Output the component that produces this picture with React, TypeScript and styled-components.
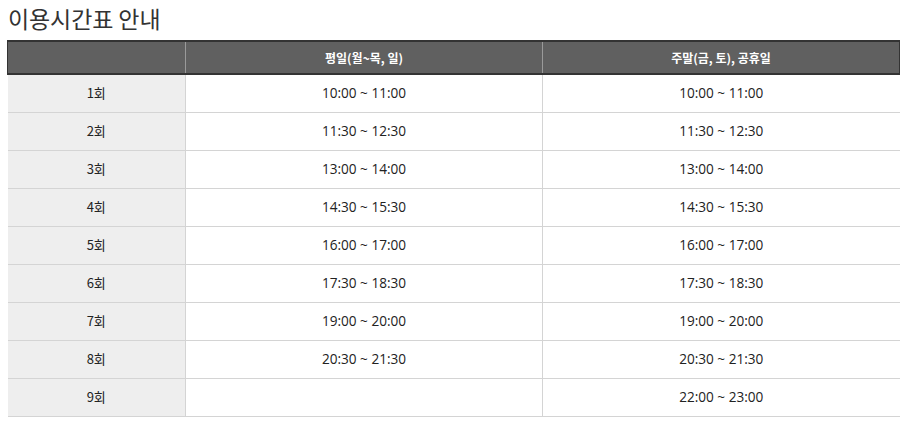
import React from "react";
import styled, { createGlobalStyle } from "styled-components";

const GlobalStyle = createGlobalStyle`
  html, body { margin: 0; padding: 0; background: #fff; }
  body { font-family: "Open Sans", "Noto Sans CJK KR", sans-serif; color: #222; }
`;

const Page = styled.div`
  padding: 2px 14px 0 7px;
`;

const Title = styled.h2`
  margin: 0 0 6px 1px;
  font-family: "Noto Sans CJK KR", sans-serif;
  font-weight: 400;
  font-size: 23px;
  line-height: 32px;
  color: #333;
  letter-spacing: -0.1px;
`;

const Table = styled.table`
  width: 892px;
  border-collapse: collapse;
  table-layout: fixed;
  font-size: 13px;
`;

const HeadCell = styled.th<{ $first?: boolean }>`
  height: 31px;
  padding: 0;
  background: #606060;
  color: #fff;
  font-family: "Noto Sans CJK KR", sans-serif;
  font-weight: 700;
  font-size: 12px;
  border-top: 2px solid #333;
  border-bottom: 2px solid #333;
  border-left: 1px solid ${(p) => (p.$first ? "#333" : "#9a9a9a")};
  &:last-child { border-right: 1px solid #333; }
`;

const Row = styled.tr``;

const Cell = styled.td<{ $label?: boolean }>`
  height: 38px;
  box-sizing: border-box;
  padding: 0 0 2px;
  text-align: center;
  font-family: ${(p) => (p.$label ? `"Noto Sans CJK KR", sans-serif` : `"Open Sans", "Noto Sans CJK KR", sans-serif`)};
  font-size: ${(p) => (p.$label ? "13px" : "13.6px")};
  color: #222;
  background: ${(p) => (p.$label ? "#eeeeee" : "#fff")};
  border-bottom: 1px solid #d4d4d4;
  border-left: ${(p) => (p.$label ? "none" : "1px solid #d4d4d4")};
`;

const rows: [string, string, string][] = [
  ["1회", "10:00 ~ 11:00", "10:00 ~ 11:00"],
  ["2회", "11:30 ~ 12:30", "11:30 ~ 12:30"],
  ["3회", "13:00 ~ 14:00", "13:00 ~ 14:00"],
  ["4회", "14:30 ~ 15:30", "14:30 ~ 15:30"],
  ["5회", "16:00 ~ 17:00", "16:00 ~ 17:00"],
  ["6회", "17:30 ~ 18:30", "17:30 ~ 18:30"],
  ["7회", "19:00 ~ 20:00", "19:00 ~ 20:00"],
  ["8회", "20:30 ~ 21:30", "20:30 ~ 21:30"],
  ["9회", "", "22:00 ~ 23:00"],
];

export default function App() {
  return (
    <Page>
      <GlobalStyle />
      <Title>이용시간표 안내</Title>
      <Table>
        <colgroup>
          <col style={{ width: 178 }} />
          <col style={{ width: 357 }} />
          <col style={{ width: 357 }} />
        </colgroup>
        <thead>
          <tr>
            <HeadCell $first></HeadCell>
            <HeadCell>평일(월~목, 일)</HeadCell>
            <HeadCell>주말(금, 토), 공휴일</HeadCell>
          </tr>
        </thead>
        <tbody>
          {rows.map(([label, a, b]) => (
            <Row key={label}>
              <Cell $label>{label}</Cell>
              <Cell>{a}</Cell>
              <Cell>{b}</Cell>
            </Row>
          ))}
        </tbody>
      </Table>
    </Page>
  );
}
